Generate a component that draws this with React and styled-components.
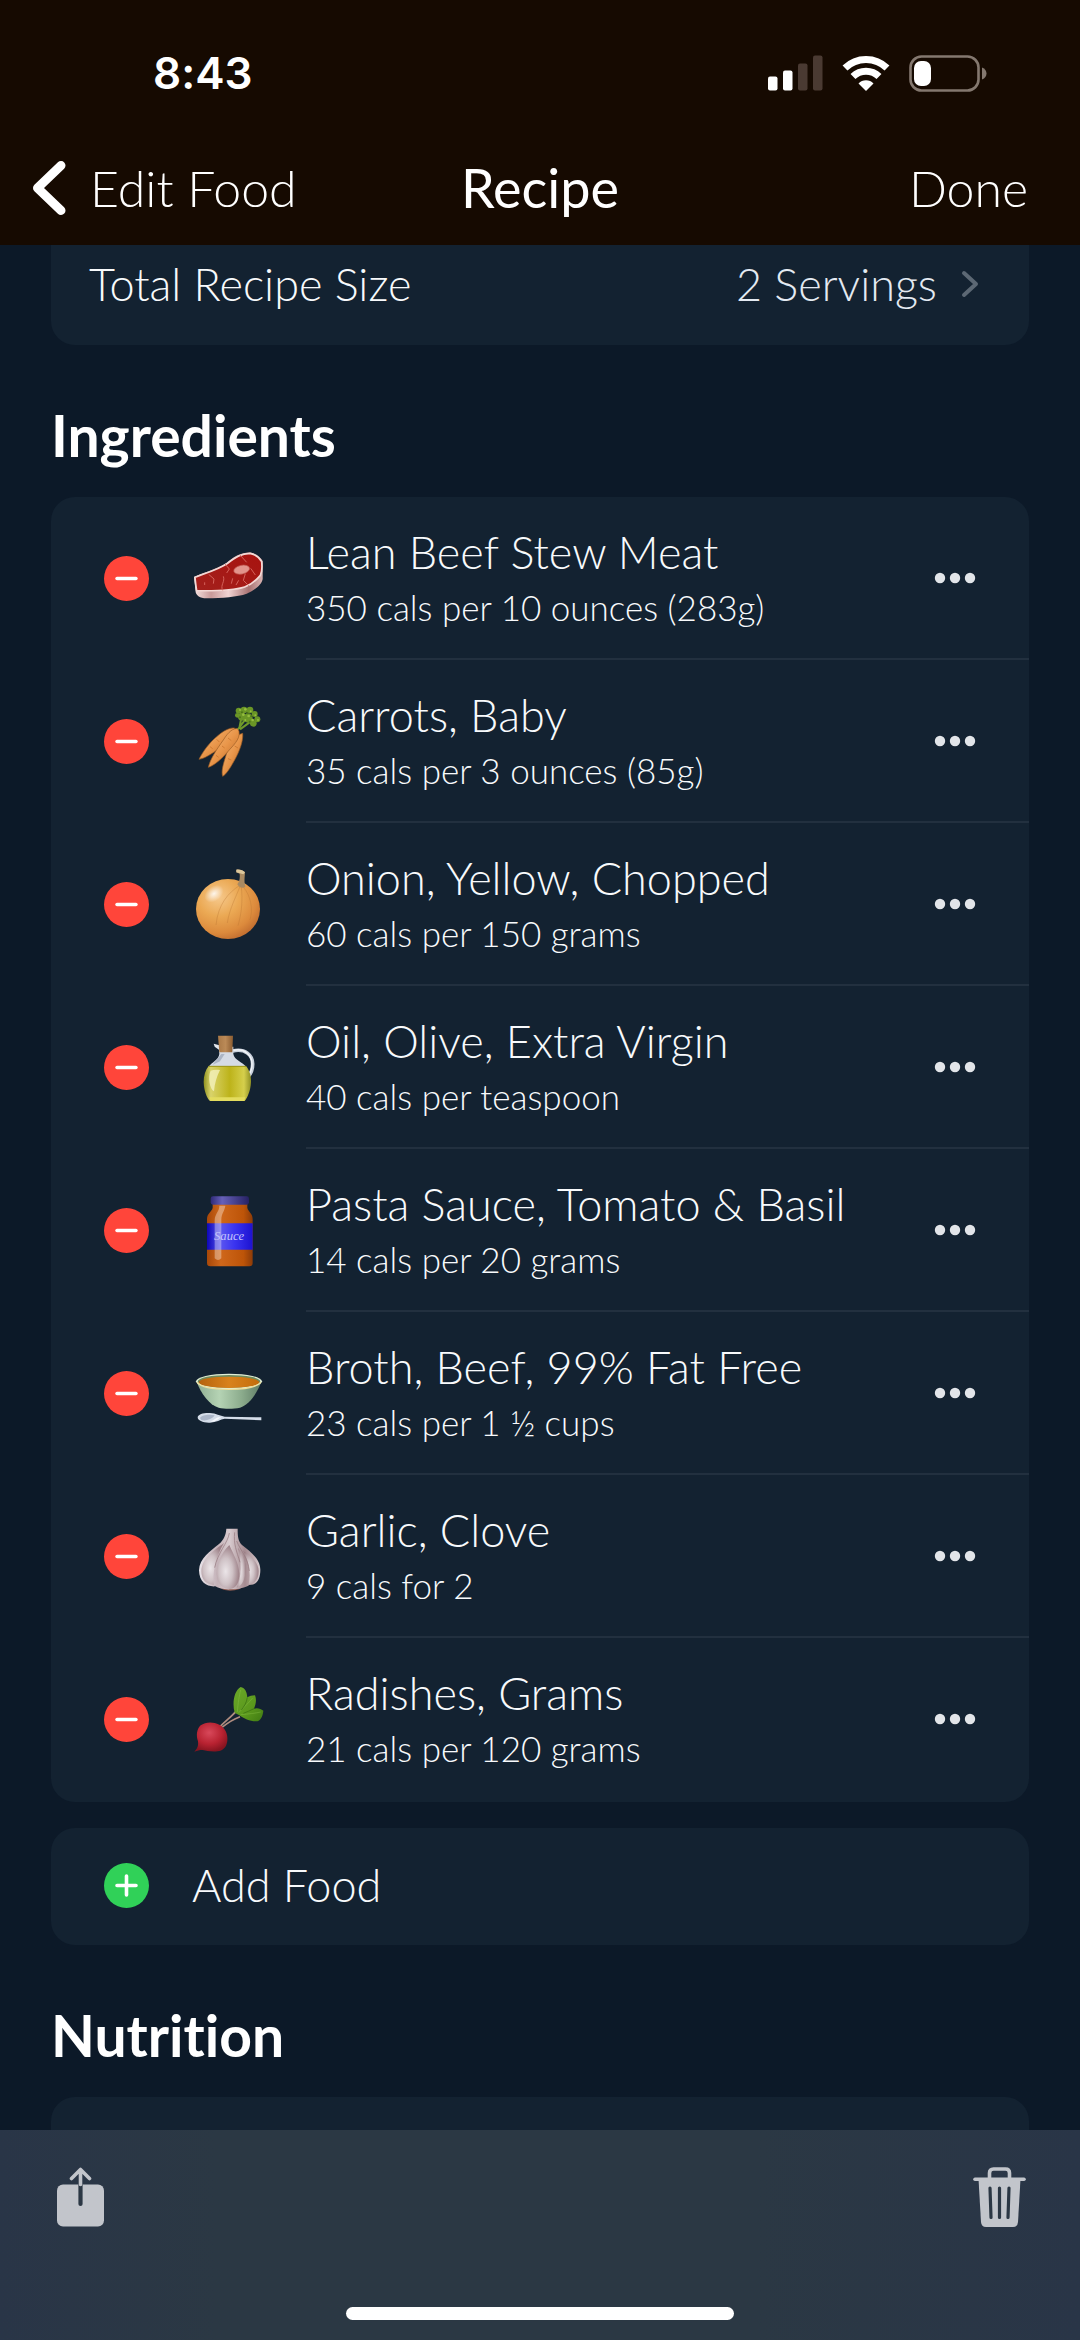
import React from 'react';
import styled, { createGlobalStyle } from 'styled-components';

const Steak = () => (
  <svg viewBox="0 0 216 216">
    <defs>
      <linearGradient id="fat" x1="0" x2="1">
        <stop offset="0" stopColor="#f6e4e2" />
        <stop offset="0.25" stopColor="#c99a9a" />
        <stop offset="0.5" stopColor="#efd3d2" />
        <stop offset="0.8" stopColor="#a87272" />
        <stop offset="1" stopColor="#d9b4b2" />
      </linearGradient>
      <linearGradient id="beef" x1="0" x2="1" y1="1" y2="0">
        <stop offset="0" stopColor="#a3201c" />
        <stop offset="1" stopColor="#a8120f" />
      </linearGradient>
    </defs>
    <path fill="url(#fat)" d="M6 102C20 93 72 80 104 59C124 44 140 30 174 28C194 32 206 44 212 54V108C210 124 188 142 164 152C136 162 90 165 44 166C22 166 14 158 11 148Z" />
    <path fill="url(#beef)" stroke="#f3d9d6" strokeWidth="5" strokeLinejoin="round" d="M9 103C30 93 76 82 107 61C132 42 148 32 174 31C194 35 203 45 209 56C211 76 210 88 205 97C192 112 176 126 158 132C126 142 70 144 14 143C12 130 10 116 9 103Z" />
    <ellipse cx="149" cy="80" rx="24" ry="13" fill="#e2948c" stroke="#c35a54" strokeWidth="2" transform="rotate(-12 149 80)" />
    <g fill="none" stroke="#d4625b" strokeWidth="3">
      <path d="M100 64L112 78L104 90M94 100C100 116 84 126 92 142M50 94L66 108L64 122M145 37L164 58M160 92L154 112L170 128M176 76L190 96M122 106L118 122M38 118V126M140 112L132 126" />
    </g>
  </svg>
);

const Carrots = () => (
  <svg viewBox="0 0 216 216">
    <defs>
      <linearGradient id="carrot" x1="0" x2="1" y1="0" y2="1">
        <stop offset="0" stopColor="#f4bd80" />
        <stop offset="0.5" stopColor="#e9964a" />
        <stop offset="1" stopColor="#b7621d" />
      </linearGradient>
    </defs>
    <g stroke="#9a5a22" strokeWidth="2">
      <path fill="url(#carrot)" d="M152 82C154 104 144 132 130 158C116 184 104 204 92 211C87 196 94 174 102 148C110 118 128 88 152 82Z" />
      <path fill="url(#carrot)" d="M128 66C112 64 92 76 74 92C50 112 32 138 21 160C36 158 56 146 78 130C102 112 126 90 128 66Z" />
      <path fill="url(#carrot)" d="M138 68C124 66 110 76 94 102C74 130 55 158 49 184C68 178 92 156 110 134C130 112 150 92 138 68Z" />
    </g>
    <g stroke="#d07c33" strokeWidth="3" fill="none">
      <path d="M74 100L82 108M54 122L62 128M108 96L118 104M90 120L98 126M72 148L80 154M128 120L138 126M108 158L118 162" />
    </g>
    <path stroke="#6f9a2a" strokeWidth="6" fill="none" d="M138 70L160 40M144 70L180 44M142 66L150 26" />
    <g fill="#6a9626">
      <circle cx="140" cy="14" r="9" /><circle cx="156" cy="12" r="10" /><circle cx="174" cy="12" r="10" />
      <circle cx="188" cy="24" r="9" /><circle cx="196" cy="40" r="9" /><circle cx="184" cy="52" r="10" />
      <circle cx="150" cy="32" r="12" /><circle cx="168" cy="36" r="14" /><circle cx="136" cy="28" r="7" />
    </g>
    <g fill="#95bd3e">
      <circle cx="144" cy="12" r="3" /><circle cx="160" cy="10" r="4" /><circle cx="176" cy="16" r="3" />
      <circle cx="190" cy="28" r="3" /><circle cx="154" cy="26" r="4" /><circle cx="170" cy="30" r="4" />
      <circle cx="182" cy="42" r="4" /><circle cx="160" cy="42" r="3" /><circle cx="198" cy="42" r="3" />
    </g>
    <g fill="#4c7519">
      <circle cx="150" cy="19" r="3" /><circle cx="166" cy="21" r="3" /><circle cx="178" cy="31" r="3" />
      <circle cx="144" cy="34" r="3" /><circle cx="173" cy="47" r="3" />
    </g>
  </svg>
);

const Onion = () => (
  <svg viewBox="0 0 216 216">
    <defs>
      <radialGradient id="onion" cx="0.35" cy="0.3" r="0.8">
        <stop offset="0" stopColor="#f6c98d" />
        <stop offset="0.4" stopColor="#eba954" />
        <stop offset="0.75" stopColor="#dc8a3c" />
        <stop offset="1" stopColor="#b9652c" />
      </radialGradient>
      <radialGradient id="shine">
        <stop offset="0" stopColor="#fff" stopOpacity="0.85" />
        <stop offset="1" stopColor="#fff" stopOpacity="0" />
      </radialGradient>
    </defs>
    <ellipse cx="108" cy="120" rx="96" ry="90" fill="url(#onion)" />
    <g fill="none" stroke="#b8732f" strokeWidth="2" opacity="0.5">
      <path d="M142 50C110 70 78 106 72 168M144 52C132 84 112 120 106 162M148 54C152 90 150 130 138 170M154 54C176 80 184 120 174 152" />
    </g>
    <ellipse cx="66" cy="74" rx="32" ry="22" fill="url(#shine)" transform="rotate(-38 66 74)" />
    <path fill="#a98a62" d="M133 2C142 0 154 4 159 10C158 26 156 36 160 54C150 60 140 54 136 46C144 36 144 24 143 14L133 10Z" />
    <path fill="#dcc79c" d="M133 2C142 0 154 4 159 10L154 16L133 10Z" />
  </svg>
);

const OliveOil = () => (
  <svg viewBox="0 0 216 216">
    <defs>
      <linearGradient id="oil" x1="0" x2="1">
        <stop offset="0" stopColor="#8f9120" />
        <stop offset="0.15" stopColor="#d9d36a" />
        <stop offset="0.55" stopColor="#bdb31a" />
        <stop offset="0.85" stopColor="#d5cf4c" />
        <stop offset="1" stopColor="#8f9024" />
      </linearGradient>
      <linearGradient id="cork" x1="0" x2="1">
        <stop offset="0" stopColor="#a87847" />
        <stop offset="0.5" stopColor="#bb8a57" />
        <stop offset="1" stopColor="#8a5c31" />
      </linearGradient>
    </defs>
    <path fill="none" stroke="#c9d1dc" strokeWidth="11" d="M122 57C160 48 182 70 182 96C182 114 176 126 168 134" />
    <path fill="none" stroke="#f2f5f9" strokeWidth="4" d="M124 55C158 47 180 70 180 96C180 110 175 122 170 128" />
    <path fill="#e3e8ef" d="M65 35L82 40V54L68 44Z" />
    <path fill="#d5dbe5" d="M80 44H124V66C126 84 154 92 162 104H50C58 92 80 84 82 66Z" />
    <path fill="#9aa5b6" d="M88 66H98L84 88L62 98Z" opacity="0.7" />
    <path fill="url(#oil)" d="M50 102H162C172 114 178 132 177 150C176 176 166 198 158 207H54C44 198 36 176 35 150C35 132 40 114 50 102Z" />
    <path fill="#f4f1bd" opacity="0.8" d="M56 116C66 112 78 114 84 114C74 134 68 154 66 178C54 172 46 136 56 116Z" />
    <path fill="#e3dc5e" d="M52 196H160L156 207H56Z" />
    <path stroke="#9a951b" strokeWidth="3" d="M50 103H162" />
    <path fill="url(#cork)" d="M78 11H123L121 61H82Z" />
  </svg>
);

const SauceJar = () => (
  <svg viewBox="0 0 216 216">
    <defs>
      <linearGradient id="sauce" x1="0" x2="1">
        <stop offset="0" stopColor="#a74708" />
        <stop offset="0.3" stopColor="#cf671b" />
        <stop offset="0.8" stopColor="#bd5408" />
        <stop offset="1" stopColor="#8c3b08" />
      </linearGradient>
      <linearGradient id="label" x1="0" x2="1">
        <stop offset="0" stopColor="#0d06b8" />
        <stop offset="0.3" stopColor="#5a55f0" />
        <stop offset="0.6" stopColor="#3a34f0" />
        <stop offset="1" stopColor="#1c12d0" />
      </linearGradient>
      <linearGradient id="lid" x1="0" x2="1">
        <stop offset="0" stopColor="#2f2a78" />
        <stop offset="0.3" stopColor="#6660b8" />
        <stop offset="1" stopColor="#262163" />
      </linearGradient>
    </defs>
    <path fill="url(#sauce)" d="M62 26H166V38C168 50 182 54 182 72V204Q182 214 172 214H55Q45 214 45 204V72C45 54 60 50 62 38Z" />
    <path fill="url(#label)" d="M45 85H182V164H45Z" />
    <path fill="#fff" opacity="0.35" d="M82 32H100C98 48 88 56 88 74V190Q78 200 68 190V76C68 56 82 50 82 32Z" />
    <rect x="56" y="4" width="115" height="25" rx="7" fill="url(#lid)" />
    <text x="66" y="136" fill="#c4c3fb" fontFamily="'Liberation Serif', serif" fontStyle="italic" fontSize="38">Sauce</text>
  </svg>
);

const Broth = () => (
  <svg viewBox="0 0 216 216">
    <defs>
      <linearGradient id="bowl" x1="0" x2="1">
        <stop offset="0" stopColor="#8fae92" />
        <stop offset="0.35" stopColor="#b5d3b4" />
        <stop offset="0.7" stopColor="#8bab8c" />
        <stop offset="1" stopColor="#5f7d66" />
      </linearGradient>
      <linearGradient id="soup" x1="0" x2="1">
        <stop offset="0" stopColor="#b5620c" />
        <stop offset="0.5" stopColor="#d8821d" />
        <stop offset="1" stopColor="#c46c0b" />
      </linearGradient>
    </defs>
    <path fill="url(#bowl)" d="M14 72C26 104 52 142 80 149C98 153 124 153 144 149C172 140 196 104 208 72Z" />
    <ellipse cx="111" cy="70" rx="99" ry="23" fill="#e2efd5" />
    <ellipse cx="111" cy="70" rx="94" ry="19" fill="#6f8a5c" />
    <ellipse cx="111" cy="73" rx="91" ry="17" fill="url(#soup)" />
    <path fill="none" stroke="#efdf9c" strokeWidth="4" d="M15 73C28 88 70 94 111 94C152 94 194 88 207 73" />
    <path fill="#d5dde9" d="M17 178C18 168 36 164 54 165C72 166 84 174 98 176L208 178V187L98 182C86 184 72 193 54 194C34 195 17 188 17 178Z" />
    <path fill="#8f9db2" opacity="0.6" d="M24 180C30 170 52 168 68 172C60 184 40 190 28 186Z" />
    <path fill="#f5f8fc" d="M54 190C66 188 72 176 88 177C78 184 68 194 54 190Z" />
  </svg>
);

const Garlic = () => (
  <svg viewBox="0 0 216 216">
    <defs>
      <linearGradient id="garlic" x1="0" x2="1">
        <stop offset="0" stopColor="#e9e4ea" />
        <stop offset="0.3" stopColor="#c4b2b8" />
        <stop offset="0.5" stopColor="#d8cbcf" />
        <stop offset="0.75" stopColor="#a58b91" />
        <stop offset="1" stopColor="#d9cccf" />
      </linearGradient>
      <radialGradient id="clove" cx="0.4" cy="0.6" r="0.6">
        <stop offset="0" stopColor="#ebe5e8" />
        <stop offset="0.5" stopColor="#cfc2c6" />
        <stop offset="1" stopColor="#9d8188" />
      </radialGradient>
    </defs>
    <path fill="#8b5a50" d="M76 190C84 206 100 209 114 209C134 209 150 204 158 190Z" />
    <path fill="url(#garlic)" d="M103 23H137C137 44 138 60 150 72C172 90 205 112 205 146C205 172 196 192 172 192C160 200 136 206 116 205C96 206 80 202 70 196C46 198 22 186 21 148C22 112 56 90 80 70C96 56 102 40 103 23Z" />
    <path fill="url(#clove)" d="M96 66C66 88 30 112 28 150C28 176 42 190 66 192C60 160 70 110 96 66Z" />
    <path fill="url(#clove)" d="M112 72C86 98 74 130 74 160C76 192 94 204 114 204C134 202 142 182 142 158C140 124 124 100 112 72Z" />
    <path fill="url(#clove)" d="M138 80C156 104 166 134 160 160C156 184 146 196 134 200C150 170 148 120 138 80Z" />
    <path fill="url(#clove)" d="M152 88C180 108 200 126 200 150C200 174 190 186 170 190C178 156 170 118 152 88Z" />
    <path fill="none" stroke="#94777d" strokeWidth="3" opacity="0.7" d="M112 36C108 66 76 96 68 140M128 34C124 70 134 90 144 124M134 60C146 90 168 110 172 150" />
  </svg>
);

const Radish = () => (
  <svg viewBox="0 0 216 216">
    <defs>
      <radialGradient id="radish" cx="0.45" cy="0.35" r="0.65">
        <stop offset="0" stopColor="#d8485a" />
        <stop offset="0.6" stopColor="#b82231" />
        <stop offset="1" stopColor="#861420" />
      </radialGradient>
      <linearGradient id="leaf" x1="0" x2="1" y1="0" y2="1">
        <stop offset="0" stopColor="#6ba829" />
        <stop offset="0.6" stopColor="#5a981c" />
        <stop offset="1" stopColor="#3f7a12" />
      </linearGradient>
    </defs>
    <path fill="none" stroke="#b08d80" strokeWidth="5" d="M84 128C104 108 118 98 132 82M90 130C112 112 128 104 144 98" />
    <path fill="url(#leaf)" d="M128 86C120 58 126 20 146 9C158 12 164 20 166 40C172 36 180 34 189 34C194 46 192 60 186 74C196 70 206 74 214 80C212 100 204 112 192 112C172 112 156 104 142 94Z" />
    <g fill="none" stroke="#8bc34a" strokeWidth="2" opacity="0.6">
      <path d="M136 84C138 56 142 34 146 18M140 86C156 70 172 54 182 42M146 92C168 90 190 88 206 84" />
    </g>
    <path fill="none" stroke="#376d10" strokeWidth="2" d="M166 40C164 56 156 68 148 78M186 74C174 80 164 84 154 88" />
    <path fill="url(#radish)" d="M7 203C14 196 20 188 18 172C12 154 14 136 26 124C40 114 62 112 82 122C100 132 108 150 106 170C104 190 92 200 76 202C56 204 44 200 32 198C22 198 16 200 7 203Z" />
  </svg>
);

const MinusIcon = () => (
  <svg width="45" height="45" viewBox="0 0 45 45">
    <circle cx="22.5" cy="22.5" r="22.5" fill="#ff453a" />
    <path d="M13 22.5H32" stroke="#fff" strokeWidth="3.4" strokeLinecap="round" />
  </svg>
);

const PlusIcon = () => (
  <svg width="45" height="45" viewBox="0 0 45 45">
    <circle cx="22.5" cy="22.5" r="22.5" fill="#30d158" />
    <path d="M13 22.5H32M22.5 13V32" stroke="#fff" strokeWidth="3.6" strokeLinecap="round" />
  </svg>
);

const DotsIcon = () => (
  <svg width="42" height="12" viewBox="0 0 42 12" fill="#e2e5e9">
    <circle cx="6" cy="6" r="5.2" />
    <circle cx="21" cy="6" r="5.2" />
    <circle cx="36" cy="6" r="5.2" />
  </svg>
);

const BackIcon = () => (
  <svg width="34" height="56" viewBox="0 0 34 56">
    <path d="M29 5.500L5.500 28L29 50.500" fill="none" stroke="#fff" strokeWidth="9" strokeLinecap="round" strokeLinejoin="round" />
  </svg>
);

const ForwardIcon = () => (
  <svg width="18" height="28" viewBox="0 0 18 28">
    <path d="M3 3L15 14L3 25" fill="none" stroke="#5c6874" strokeWidth="4" strokeLinecap="round" strokeLinejoin="round" />
  </svg>
);

const SignalIcon = () => (
  <svg width="55" height="36" viewBox="0 0 55 36" fill="#fff">
    <rect x="0" y="21.500" width="9.500" height="14" rx="2" />
    <rect x="15" y="15.500" width="9.500" height="20" rx="2" />
    <rect x="30" y="8.500" width="9.500" height="27" rx="2" fill="#4a3a32" />
    <rect x="45" y="0.500" width="9.500" height="35" rx="2" fill="#4a3a32" />
  </svg>
);

const WifiIcon = () => (
  <svg width="48" height="36" viewBox="0 0 48 36">
    <g fill="none" stroke="#fff" strokeWidth="7">
      <path d="M3 13A30 30 0 0 1 45 13" />
      <path d="M11 21.500A18.500 18.500 0 0 1 37 21.500" />
    </g>
    <path fill="#fff" d="M24 36L16.500 28.500A10.500 10.500 0 0 1 31.500 28.500Z" />
  </svg>
);

const BatteryIcon = () => (
  <svg width="78" height="37" viewBox="0 0 78 37">
    <rect x="1.500" y="1.500" width="68" height="34" rx="11" fill="none" stroke="#84786f" strokeWidth="2.600" />
    <path fill="#84786f" d="M73 12.500C79 14.500 79 22.500 73 24.500Z" />
    <rect x="5" y="6" width="17" height="25" rx="7" fill="#fff" />
  </svg>
);

const ShareIcon = () => (
  <svg width="47" height="60" viewBox="0 0 47 60">
    <rect x="0" y="17.500" width="47" height="42" rx="6" fill="#c2c5cb" />
    <path d="M23.500 17.500V37" stroke="#2b3744" strokeWidth="4.200" strokeLinecap="round" />
    <path d="M23.500 17.500V3M14.500 11.500L23.500 2.500L32.500 11.500" fill="none" stroke="#c2c5cb" strokeWidth="3.600" strokeLinecap="round" strokeLinejoin="round" />
  </svg>
);

const TrashIcon = () => (
  <svg width="53" height="60" viewBox="0 0 53 60">
    <path d="M16.500 12V6Q16.500 2 20.500 2H32.500Q36.500 2 36.500 6V12" fill="none" stroke="#c2c5cb" strokeWidth="3.600" />
    <path d="M2 12.200H51" stroke="#c2c5cb" strokeWidth="3.600" strokeLinecap="round" />
    <path d="M5.500 12H47.500L45 55Q44.600 60 40 60H13Q8.400 60 8 55Z" fill="#c2c5cb" />
    <path d="M17 21L18 50.500M26.500 21V50.500M36 21L35 50.500" stroke="#2b3744" strokeWidth="3.200" strokeLinecap="round" />
  </svg>
);

const ingredients = [
  { name: 'Lean Beef Stew Meat', info: '350 cals per 10 ounces (283g)', Icon: Steak },
  { name: 'Carrots, Baby', info: '35 cals per 3 ounces (85g)', Icon: Carrots },
  { name: 'Onion, Yellow, Chopped', info: '60 cals per 150 grams', Icon: Onion },
  { name: 'Oil, Olive, Extra Virgin', info: '40 cals per teaspoon', Icon: OliveOil },
  { name: 'Pasta Sauce, Tomato & Basil', info: '14 cals per 20 grams', Icon: SauceJar },
  { name: 'Broth, Beef, 99% Fat Free', info: '23 cals per 1 ½ cups', Icon: Broth },
  { name: 'Garlic, Clove', info: '9 cals for 2', Icon: Garlic },
  { name: 'Radishes, Grams', info: '21 cals per 120 grams', Icon: Radish }
];

const App = () => (
  <Page>
    <GlobalStyle />
    <Header>
      <StatusBar>
        <Time>8:43</Time>
        <StatusIcons>
          <SignalIcon />
          <WifiIcon />
          <BatteryIcon />
        </StatusIcons>
      </StatusBar>
      <NavBar>
        <BackButton>
          <BackIcon />
          Edit Food
        </BackButton>
        <NavTitle>Recipe</NavTitle>
        <DoneButton>Done</DoneButton>
      </NavBar>
    </Header>
    <Content>
      <SizeRow>
        <span>Total Recipe Size</span>
        <SizeValue>
          2 Servings
          <ForwardIcon />
        </SizeValue>
      </SizeRow>

      <SectionTitle>Ingredients</SectionTitle>
      <IngredientList>
        {ingredients.map(({ name, info, Icon }) => (
          <Ingredient key={name}>
            <IconButton aria-label={`Remove ${name}`}>
              <MinusIcon />
            </IconButton>
            <Picture>
              <Icon />
            </Picture>
            <Details>
              <Text>
                <Name>{name}</Name>
                <Info>{info}</Info>
              </Text>
              <IconButton aria-label={`More options for ${name}`}>
                <DotsIcon />
              </IconButton>
            </Details>
          </Ingredient>
        ))}
      </IngredientList>
      <AddButton>
        <PlusIcon />
        Add Food
      </AddButton>

      <SectionTitle>Nutrition</SectionTitle>
      <NutritionCard />
    </Content>
    <Toolbar>
      <ToolbarActions>
        <IconButton aria-label="Share">
          <ShareIcon />
        </IconButton>
        <IconButton aria-label="Delete">
          <TrashIcon />
        </IconButton>
      </ToolbarActions>
      <HomeIndicator />
    </Toolbar>
  </Page>
);

//------------Styles-------------

const GlobalStyle = createGlobalStyle`
  * {
    box-sizing: border-box;
  }
  body {
    margin: 0;
    background: #0c1928;
  }
  svg {
    display: block;
    flex: none;
  }
  button {
    margin: 0;
    padding: 0;
    border: 0;
    background: none;
    color: inherit;
    font: inherit;
    text-align: left;
  }
`;

const Page = styled.div`
  display: flex;
  flex-direction: column;
  min-height: 100vh;
  color: #f8fafc;
  font-family: Lato, sans-serif;
  font-size: 45px;
  font-weight: 300;
  font-variant-ligatures: none;
  line-height: 52px;
`;

const Header = styled.header`
  background: #160a01;
  color: #fff;
  padding-bottom: 15px;
`;

const StatusBar = styled.div`
  display: flex;
  justify-content: space-between;
  align-items: center;
  height: 146px;
  padding: 0 93px 0 153px;
`;

const Time = styled.div`
  font-family: Inter, sans-serif;
  font-size: 44px;
  font-weight: 600;
`;

const StatusIcons = styled.div`
  display: flex;
  align-items: center;
  gap: 19px;
`;

const NavBar = styled.nav`
  display: grid;
  grid-template-columns: 1fr auto 1fr;
  align-items: center;
  height: 84px;
  padding: 0 52px 0 32px;
  font-size: 50px;
`;

const BackButton = styled.button`
  display: flex;
  align-items: center;
  gap: 24px;
`;

const NavTitle = styled.h1`
  margin: 0;
  padding-left: 20px;
  font-size: 54px;
  font-weight: 400;
`;

const DoneButton = styled.button`
  justify-self: end;
`;

const Content = styled.main`
  display: flex;
  flex: 1;
  flex-direction: column;
  padding: 0 51px;
`;

const Card = styled.div`
  background: #132231;
  border-radius: 24px;
`;

const SizeRow = styled(Card)`
  display: flex;
  justify-content: space-between;
  border-top-left-radius: 0;
  border-top-right-radius: 0;
  padding: 13px 50px 35px 38px;
`;

const SizeValue = styled.button`
  display: flex;
  align-items: center;
  gap: 24px;
  color: #e4eaf2;
`;

const SectionTitle = styled.h2`
  margin: 58px 0 30px;
  color: #fff;
  font-size: 57px;
  font-weight: 700;
  line-height: 64px;
`;

const IngredientList = styled(Card).attrs({ as: 'ul' })`
  list-style: none;
  margin: 0;
  padding: 0 0 1px;
`;

const Ingredient = styled.li`
  display: flex;
  align-items: center;
  height: 163px;
  padding-left: 53px;
`;

const Picture = styled.div`
  flex: none;
  width: 72px;
  margin: 0 42px 0 43px;
`;

const Details = styled.div`
  display: flex;
  flex: 1;
  justify-content: space-between;
  align-items: center;
  align-self: stretch;
  border-bottom: 2px solid #22303f;
  padding-right: 53px;

  ${Ingredient}:last-child & {
    border-bottom-color: transparent;
  }
`;

const Text = styled.div`
  display: flex;
  flex-direction: column;
  gap: 6px;
`;

const Name = styled.div``;

const Info = styled.div`
  font-size: 35px;
  line-height: 46px;
`;

const IconButton = styled.button`
  flex: none;
`;

const AddButton = styled(Card).attrs({ as: 'button' })`
  display: flex;
  align-items: center;
  gap: 43px;
  margin-top: 26px;
  padding: 31px 53px 34px;
  background: #132231;
`;

const NutritionCard = styled(Card)`
  flex: 1;
  min-height: 33px;
  border-bottom-left-radius: 0;
  border-bottom-right-radius: 0;
`;

const Toolbar = styled.footer`
  display: flex;
  flex-direction: column;
  justify-content: space-between;
  align-items: center;
  height: 210px;
  padding: 37px 0 20px;
  background: linear-gradient(90deg, #293547, #2b3844 20%, #2b3844 70%, #293547);
`;

const ToolbarActions = styled.div`
  display: flex;
  justify-content: space-between;
  align-self: stretch;
  padding: 0 54px 0 57px;
`;

const HomeIndicator = styled.div`
  width: 36%;
  height: 13px;
  border-radius: 7px;
  background: #fff;
`;

//----------------------End Styles--------------------
export default App;
